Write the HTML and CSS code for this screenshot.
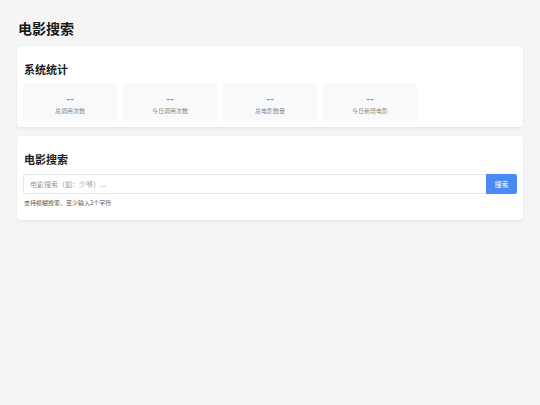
FILE: index.html
```html
<!DOCTYPE html>
<html lang="zh">
<head>
<meta charset="utf-8">
<title>电影搜索</title>
<link rel="stylesheet" href="styles.css">
</head>
<body>
<div class="page">
  <h1 class="page-title">电影搜索</h1>
  <section class="card">
    <h2 class="card-title">系统统计</h2>
    <div class="stats">
      <div class="stat"><div class="stat-value">--</div><div class="stat-label">总调用次数</div></div>
      <div class="stat"><div class="stat-value">--</div><div class="stat-label">今日调用次数</div></div>
      <div class="stat"><div class="stat-value">--</div><div class="stat-label">总电影数量</div></div>
      <div class="stat"><div class="stat-value">--</div><div class="stat-label">今日新增电影</div></div>
    </div>
  </section>
  <section class="card">
    <h2 class="card-title">电影搜索</h2>
    <div class="search-row">
      <input class="search-input" type="text" placeholder="电影搜索（如：少爷）...">
      <button class="search-btn">搜索</button>
    </div>
    <p class="hint">支持模糊搜索，至少输入2个字符</p>
  </section>
</div>
</body>
</html>
```
FILE: styles.css
```css
* { box-sizing: border-box; }
html, body {
  margin: 0;
  padding: 0;
  background: #f5f5f5;
  font-family: "Noto Sans CJK SC", "Noto Sans", "Liberation Sans", sans-serif;
  color: #222;
}
.page {
  padding: 0 17px;
  display: flex;
  flex-direction: column;
}
.page-title {
  font-size: 14px;
  line-height: 18px;
  font-weight: 700;
  margin: 19px 0 9px 1px;
  color: #1a1a1a;
}
.card {
  background: #fff;
  border-radius: 4px;
  box-shadow: 0 1px 3px rgba(0,0,0,0.08);
  padding: 6px;
  margin-bottom: 9px;
}
.card-title {
  font-size: 11px;
  line-height: 14px;
  font-weight: 700;
  margin: 10px 0 7px 1px;
  color: #1a1a1a;
}
.stats {
  display: grid;
  grid-template-columns: repeat(4, 94px);
  gap: 6px;
}
.stat {
  background: #f8f9fa;
  border-radius: 3px;
  padding: 9px 4px 6px;
  text-align: center;
}
.stat-value {
  font-family: "Liberation Sans", sans-serif;
  font-size: 11px;
  line-height: 12px;
  font-weight: 700;
  color: #6b9cf2;
}
.stat-label {
  margin-top: 3px;
  font-size: 6px;
  line-height: 8px;
  color: #888;
}
.search-row {
  display: flex;
  margin-top: 8px;
}
.search-input {
  flex: 1;
  height: 20px;
  border: 1px solid #e6e6e6;
  border-right: none;
  border-radius: 2px 0 0 2px;
  padding: 0 6px;
  font-family: inherit;
  font-size: 7px;
  color: #333;
  outline: none;
  background: #fff;
}
.search-input::placeholder { color: #999; }
.search-btn {
  width: 31px;
  height: 20px;
  border: none;
  border-radius: 0 2px 2px 0;
  background: #4a8af4;
  color: #fff;
  font-family: inherit;
  font-size: 7px;
  padding: 0;
}
.hint {
  margin: 5px 0 7px 1px;
  font-size: 6px;
  line-height: 8px;
  color: #555;
}
```
